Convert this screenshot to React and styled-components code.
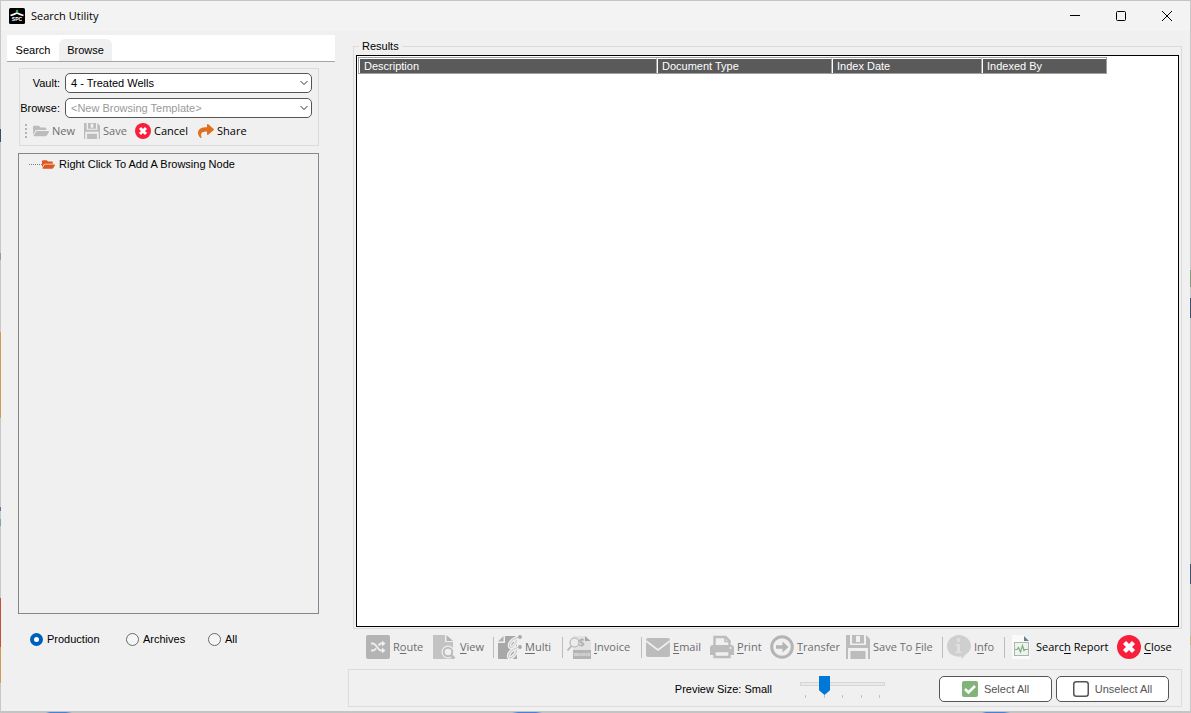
import React, { useState } from "react";
import styled, { createGlobalStyle } from "styled-components";
import { FaFolderOpen, FaShare } from "react-icons/fa";

const GlobalStyle = createGlobalStyle`
  * {
    box-sizing: border-box;
  }
  body {
    margin: 0;
    font-family: "Liberation Sans", Arial, sans-serif;
    font-size: 11px;
    line-height: 16px;
    color: #000000;
  }
  button, select, input {
    font: inherit;
    color: inherit;
    margin: 0;
  }
`;

// the desktop shows through as a one pixel edge around the window
const Desktop = styled.div`
  display: flex;
  min-height: 100vh;
  padding: 1px 1px 2px;
  background:
    linear-gradient(to right, transparent 46px, #4a80d4 50px 66px, transparent 72px 512px, #4a80d4 518px 536px, transparent 542px 982px, #4a80d4 986px 1004px, transparent 1010px) bottom / 100% 1px no-repeat,
    linear-gradient(#c8c8c8 129px, #39506b 129px 142px, #c8c8c8 142px 253px, #7fa3b5 253px 260px, #c8c8c8 260px 332px, #cf9b4f 332px 418px, #c8c8c8 418px 507px, #5f6fa0 507px 511px, #c8c8c8 511px 519px, #7fa3b5 519px 526px, #c8c8c8 526px 598px, #c3523a 598px 647px, #cf9b4f 647px 683px, #c8c8c8 683px) left / 1px 100% no-repeat,
    linear-gradient(#c8c8c8 270px, #849a7c 270px 287px, #c8c8c8 287px 298px, #405368 298px 318px, #c8c8c8 318px 564px, #405368 564px 584px, #c8c8c8 584px 636px, #c0b795 636px 645px, #c8c8c8 645px) right / 1px 100% no-repeat,
    #c4c4c4;
`;

const Window = styled.div`
  flex: 1;
  display: flex;
  flex-direction: column;
  background: #f0f0f0;
`;

const TitleBar = styled.header`
  display: flex;
  align-items: center;
  height: 30px;
  padding-left: 8px;
  background: #f3f3f3;
`;

const Title = styled.h1`
  flex: 1;
  margin: 0;
  padding-left: 6px;
  font: 400 11px/16px "Open Sans", sans-serif;
`;

const CaptionButton = styled.button`
  display: grid;
  place-items: center;
  width: 46px;
  height: 30px;
  padding: 0;
  border: 0;
  background: none;
`;

const Body = styled.div`
  flex: 1;
  display: flex;
  gap: 13px;
  padding: 4px 8px 4px 6px;
`;

const Sidebar = styled.aside`
  flex: 0 0 328px;
  display: flex;
  flex-direction: column;
`;

const TabStrip = styled.div`
  display: flex;
  align-items: flex-end;
  height: 27px;
  border-bottom: 1px solid #a5a5a5;
  background: #ffffff;
`;

const Tab = styled.button`
  width: ${(p) => (p.$active ? 53 : 52)}px;
  height: 22px;
  padding: 0;
  border: 0;
  border-radius: 6px 6px 0 0;
  background: ${(p) => (p.$active ? "#f0f0f0" : "#ffffff")};
`;

const Template = styled.div`
  display: flex;
  flex-direction: column;
  gap: 5px;
  height: 78px;
  margin: 6px 16px 0 12px;
  padding: 4px 6px 0 0;
  border: 1px solid #dcdcdc;
`;

const Field = styled.div`
  display: grid;
  grid-template-columns: 40px 1fr;
  align-items: center;
  column-gap: 5px;
  height: 20px;
`;

const FieldLabel = styled.label`
  justify-self: end;
  background: #f0f0f0;
  white-space: nowrap;
`;

const SelectBox = styled.div`
  position: relative;
  height: 20px;

  svg {
    position: absolute;
    right: 4px;
    top: 7px;
    pointer-events: none;
  }
`;

const Select = styled.select`
  display: block;
  width: 100%;
  height: 20px;
  padding: 0 20px 0 5px;
  appearance: none;
  border: 1px solid #555555;
  border-radius: 5px;
  background: #ffffff;
  color: ${(p) => (p.$hint ? "#9a9a9a" : "#000000")};
`;

const Actions = styled.div`
  display: flex;
  align-items: center;
  height: 16px;
  padding-left: 5px;
`;

const Grip = styled.span`
  width: 2px;
  height: 14px;
  margin-right: 6px;
  background: repeating-linear-gradient(#b4b4b4 0 2px, transparent 2px 4px);
`;

const Action = styled.button`
  display: flex;
  align-items: center;
  gap: 3px;
  flex: 0 0 ${(p) => p.$width}px;
  height: 24px;
  padding: 0;
  border: 0;
  background: none;
  font-family: "Open Sans", sans-serif;
  color: #000000;
  white-space: nowrap;

  &:disabled {
    color: #6d6d6d;
  }
  svg {
    flex: none;
  }
  u {
    text-underline-offset: 2px;
  }
`;

const Tree = styled.ul`
  flex: 1;
  margin: 7px 16px 0 11px;
  padding: 2px 10px;
  border: 1px solid #828790;
  list-style: none;
`;

const TreeNode = styled.li`
  display: flex;
  align-items: center;
  height: 16px;

  &::before {
    content: "";
    width: 13px;
    border-top: 1px dotted #808080;
  }
  span {
    padding-left: 4px;
  }
`;

const Scope = styled.div`
  display: flex;
  height: 93px;
  padding: 17px 0 0 23px;
`;

const RadioLabel = styled.label`
  display: flex;
  align-items: center;
  gap: 4px;
  flex: 0 0 ${(p) => p.$width}px;
  height: 16px;
`;

const Radio = styled.input`
  width: 13px;
  height: 13px;
  appearance: none;
  border: 1px solid #6a6a6a;
  border-radius: 50%;
  background: #f5f5f5;

  &:checked {
    border: 4px solid #005fb8;
    background: #ffffff;
  }
`;

const Main = styled.main`
  flex: 1;
  min-width: 0;
  display: flex;
  flex-direction: column;
`;

const Results = styled.fieldset`
  flex: 1;
  display: flex;
  flex-direction: column;
  min-width: 0;
  margin: 3px 0 0 5px;
  padding: 0 2px 1px;
  border: 1px solid #dcdcdc;
`;

const Legend = styled.legend`
  height: 17px;
  margin-left: 3px;
  padding: 0 3px;
`;

const List = styled.div`
  flex: 1;
  padding: 1px;
  border: 1px solid #000000;
  background: #ffffff;
`;

const Table = styled.table`
  width: 749px;
  table-layout: fixed;
  border-collapse: separate;
  border-spacing: 0;
  border: 1px solid #a0a0a0;
`;

const Column = styled.th`
  width: ${(p) => p.$width}px;
  height: 15px;
  padding: 0 4px;
  border-left: 1px solid #ffffff;
  border-top: 1px solid #ffffff;
  border-right: 1px solid #a0a0a0;
  background: #5a5a5a;
  color: #ffffff;
  font-weight: 400;
  line-height: 14px;
  text-align: left;

  &:last-child {
    border-right: 0;
  }
`;

const Toolbar = styled.div`
  display: flex;
  align-items: center;
  height: 40px;
  padding: 0 8px 4px 18px;
`;

const Divider = styled.span`
  width: 1px;
  height: 21px;
  margin-right: 4px;
  background: #bdbdbd;
`;

const Footer = styled.footer`
  display: flex;
  align-items: center;
  justify-content: flex-end;
  height: 38px;
  padding: 2px 12px 0 0;
  border: 1px solid #dcdcdc;
`;

const SizeSlider = styled.div`
  width: 85px;
  margin: 0 50px 0 28px;
  padding-bottom: 6px;
`;

const Range = styled.input`
  display: block;
  width: 100%;
  height: 20px;
  appearance: none;
  background: none;

  &::-webkit-slider-runnable-track {
    height: 4px;
    border: 1px solid #d6d6d6;
    background: #e7eaea;
  }
  &::-webkit-slider-thumb {
    appearance: none;
    width: 11px;
    height: 19px;
    margin-top: -7px;
    background: #0078d7;
    clip-path: polygon(0 0, 100% 0, 100% 75%, 50% 100%, 0 75%);
  }
`;

const Ticks = styled.div`
  display: flex;
  justify-content: space-between;
  margin-top: 1px;
  padding: 0 5px;

  i {
    width: 1px;
    height: 3px;
    background: #c0c0c0;
  }
`;

const PanelButton = styled.button`
  display: flex;
  align-items: center;
  justify-content: center;
  gap: 6px;
  width: 113px;
  height: 26px;
  margin-left: 4px;
  padding: 0;
  border: 1px solid #555555;
  border-radius: 5px;
  background: #ffffff;
  color: #555555;
`;

function Icon({ size = 24, children }) {
  return (
    <svg width={size} height={size} viewBox="0 0 24 24" fill="none" aria-hidden="true">
      {children}
    </svg>
  );
}

function Chevron() {
  return (
    <svg width="8" height="6" viewBox="0 0 8 6" fill="none" stroke="#333333" aria-hidden="true">
      <path d="M.5 1 4 4.5 7.5 1" />
    </svg>
  );
}

function Logo() {
  return (
    <svg width="16" height="16" viewBox="0 0 16 16" fill="none" aria-hidden="true">
      <rect width="16" height="16" rx="1.5" fill="#000000" />
      <path d="M1.500 7.500Q5 6.500 8 5q3 1.500 6.500 2.500" stroke="#ffffff" strokeWidth="1.400" />
      <circle cx="8" cy="3" r="1.300" fill="#20b24b" />
      <text x="8" y="13" textAnchor="middle" fontSize="5" fontWeight="700" fill="#ffffff">SPC</text>
    </svg>
  );
}

function CloseIcon({ size }) {
  return (
    <Icon size={size}>
      <circle cx="12" cy="12" r="12" fill="#fa1e3c" />
      <path d="m7.500 7.500 9 9M16.500 7.500l-9 9" stroke="#ffffff" strokeWidth="4.400" />
    </Icon>
  );
}

function SaveIcon({ size }) {
  return (
    <Icon size={size}>
      <path
        fill="#bcbcbc"
        fillRule="evenodd"
        d="M0 0h4v10h16V0l4 4v20h-2V13H2v11H0ZM6 0h12v8.500H6ZM10 1v6h4V1ZM4.500 16h15v8h-15Z"
      />
    </Icon>
  );
}

function RouteIcon() {
  return (
    <Icon>
      <rect width="24" height="24" rx="2" fill="#b4b4b4" />
      <path d="M5 8.500h2c3 0 5 7 8 7h2M5 15.500h2c1.300 0 2.200-1 3-2.300M12.500 10.500c.8-1.200 1.500-2 2.500-2h2" stroke="#efefef" strokeWidth="1.800" />
      <path d="m16 5.500 3.500 3-3.500 3ZM16 12.500l3.500 3-3.500 3Z" fill="#efefef" />
    </Icon>
  );
}

function ViewIcon() {
  return (
    <Icon>
      <path d="M0 0h12v7h8v17H0Z" fill="#c3c3c3" />
      <path d="M13.500 0 20 6h-6.500Z" fill="#b4b4b4" />
      <circle cx="15" cy="17" r="6.500" fill="#f0f0f0" />
      <circle cx="15" cy="17" r="4.300" fill="#f0f0f0" stroke="#bcbcbc" strokeWidth="2" />
      <path d="m18 20 3.500 3.500" stroke="#bcbcbc" strokeWidth="2.500" />
    </Icon>
  );
}

function MultiIcon() {
  return (
    <Icon>
      <path d="M0 8h7V1h12v23H0Z" fill="#a8a8a8" />
      <path d="M0 6.500 5.500 1v5.500Z" fill="#b0b0b0" />
      <path d="M22 2C16 3 11 7 11.500 11s6 0 7-6M22 12c-6 1-11.500 5-11.500 9s7 1 8-6" stroke="#f0f0f0" strokeWidth="3.500" />
      <path d="M22 2C16 3 11 7 11.500 11s6 0 7-6M22 12c-6 1-11.500 5-11.500 9s7 1 8-6" stroke="#c4c4c4" strokeWidth="1" />
      <circle cx="22" cy="2" r="1.900" fill="#a8a8a8" />
      <circle cx="22" cy="12" r="1.900" fill="#a8a8a8" />
    </Icon>
  );
}

function InvoiceIcon() {
  return (
    <Icon>
      <path d="M6 1h12l6 5v18H6Z" fill="#e2e2e2" />
      <path d="m18 1 5.500 5H18Z" fill="#a8a8a8" />
      <path d="M6 15h18v9H6Z" fill="#b4b4b4" />
      <circle cx="7.500" cy="7.500" r="4.500" fill="#ececec" stroke="#b4b4b4" strokeWidth="1.200" />
      <path d="m4.500 11-4 4.500" stroke="#b4b4b4" strokeWidth="1.800" />
      <text x="14.500" y="10.500" textAnchor="middle" fontSize="10" fontWeight="700" fill="#b0b0b0">$</text>
      <text x="15" y="21" textAnchor="middle" fontSize="4" fontWeight="700" fill="#e4e4e4">INVOICE</text>
    </Icon>
  );
}

function EmailIcon() {
  return (
    <Icon>
      <rect y="3" width="24" height="19" rx="2" fill="#bcbcbc" />
      <path d="m0 6 12 9 12-9" stroke="#f0f0f0" strokeWidth="1.600" />
    </Icon>
  );
}

function PrintIcon() {
  return (
    <Icon>
      <path d="M4.500 11V2h11l4 4v5" stroke="#bcbcbc" strokeWidth="2.400" />
      <path d="M15 2v4.500h4" stroke="#bcbcbc" strokeWidth="1.600" />
      <path d="M0 20v-7q0-3 3-3h18q3 0 3 3v7Z" fill="#bcbcbc" />
      <path d="M4.500 16h15v6h-15Z" fill="#f0f0f0" stroke="#bcbcbc" strokeWidth="2.400" />
      <circle cx="20.500" cy="13" r="1" fill="#f0f0f0" />
    </Icon>
  );
}

function TransferIcon() {
  return (
    <Icon>
      <circle cx="12" cy="12" r="10.300" stroke="#b4b4b4" strokeWidth="3" />
      <path d="M6 10.300h6.500V6.500l6 5.500-6 5.500v-3.800H6Z" fill="#b4b4b4" />
    </Icon>
  );
}

function InfoIcon() {
  return (
    <Icon>
      <path d="M12 0c6.600 0 12 5 12 11 0 4-2.500 7-6 9l-3 4-1-2.500C6 22.500 0 18 0 11 0 5 5.400 0 12 0Z" fill="#cfcfcf" />
      <circle cx="11.500" cy="5" r="1.900" fill="#e0e0e0" />
      <path d="M8.500 9H13v7.500h2V18H8.500v-1.500h1.700v-6H8.500Z" fill="#e0e0e0" />
    </Icon>
  );
}

function ReportIcon() {
  return (
    <Icon>
      <path d="M3 0h12l6 6v18H3Z" fill="#fafafa" />
      <path d="m15 1 5 5h-5Z" fill="#67808f" />
      <rect x="5.500" y="7.500" width="14" height="13" fill="#eef3ee" stroke="#a9b7b3" />
      <path d="M6 14.500h2l1.500-2 2 4.500 2-6.500 1.500 5 1-1h3" stroke="#7fb07f" strokeWidth="1.200" />
    </Icon>
  );
}

const columns = [
  { label: "Description", width: 298 },
  { label: "Document Type", width: 175 },
  { label: "Index Date", width: 150 },
  { label: "Indexed By", width: 124 },
];

// hot is the letter of the label that is its access key
const tools = [
  { label: "Route", hot: 1, icon: <RouteIcon />, width: 67 },
  { label: "View", hot: 0, icon: <ViewIcon />, width: 60 },
  { divider: true },
  { label: "Multi", hot: 0, icon: <MultiIcon />, width: 64 },
  { divider: true },
  { label: "Invoice", hot: 0, icon: <InvoiceIcon />, width: 74 },
  { divider: true },
  { label: "Email", hot: 0, icon: <EmailIcon />, width: 64 },
  { label: "Print", hot: 0, icon: <PrintIcon />, width: 60 },
  { label: "Transfer", hot: 0, icon: <TransferIcon />, width: 76 },
  { label: "Save To File", hot: 8, icon: <SaveIcon />, width: 96 },
  { divider: true },
  { label: "Info", hot: 1, icon: <InfoIcon />, width: 57 },
  { divider: true },
  { label: "Search Report", hot: 5, icon: <ReportIcon />, width: 108, enabled: true },
  { label: "Close", hot: 0, icon: <CloseIcon />, width: 57, enabled: true },
];

const scopes = [
  { label: "Production", width: 96 },
  { label: "Archives", width: 82 },
  { label: "All", width: 60 },
];

export default function App() {
  const [tab, setTab] = useState("Browse");
  const [scope, setScope] = useState("Production");
  const [size, setSize] = useState(1);

  return (
    <>
      <GlobalStyle />
      <Desktop>
        <Window>
          <TitleBar>
            <Logo />
            <Title>Search Utility</Title>
            <CaptionButton aria-label="Minimize">
              <svg width="10" height="10" viewBox="0 0 10 10" stroke="#000000">
                <path d="M0 4.500h10" />
              </svg>
            </CaptionButton>
            <CaptionButton aria-label="Maximize">
              <svg width="10" height="10" viewBox="0 0 10 10" fill="none" stroke="#000000">
                <rect x=".5" y=".5" width="9" height="9" rx="1" />
              </svg>
            </CaptionButton>
            <CaptionButton aria-label="Close window">
              <svg width="10" height="10" viewBox="0 0 10 10" stroke="#000000">
                <path d="m0 0 10 10M10 0 0 10" />
              </svg>
            </CaptionButton>
          </TitleBar>
          <Body>
            <Sidebar>
              <TabStrip role="tablist">
                {["Search", "Browse"].map((name) => (
                  <Tab
                    key={name}
                    role="tab"
                    aria-selected={tab === name}
                    $active={tab === name}
                    onClick={() => setTab(name)}
                  >
                    {name}
                  </Tab>
                ))}
              </TabStrip>
              <Template>
                <Field>
                  <FieldLabel htmlFor="vault">Vault:</FieldLabel>
                  <SelectBox>
                    <Select id="vault">
                      <option>4 - Treated Wells</option>
                    </Select>
                    <Chevron />
                  </SelectBox>
                </Field>
                <Field>
                  <FieldLabel htmlFor="browse">Browse:</FieldLabel>
                  <SelectBox>
                    <Select id="browse" $hint>
                      <option>&lt;New Browsing Template&gt;</option>
                    </Select>
                    <Chevron />
                  </SelectBox>
                </Field>
                <Actions>
                  <Grip />
                  <Action $width={51} disabled>
                    <FaFolderOpen size={16} color="#bcbcbc" />
                    New
                  </Action>
                  <Action $width={51} disabled>
                    <SaveIcon size={16} />
                    Save
                  </Action>
                  <Action $width={63}>
                    <CloseIcon size={16} />
                    Cancel
                  </Action>
                  <Action $width={50}>
                    <FaShare size={16} color="#e0701f" />
                    Share
                  </Action>
                </Actions>
              </Template>
              <Tree>
                <TreeNode>
                  <FaFolderOpen size={13} color="#dd5a1c" />
                  <span>Right Click To Add A Browsing Node</span>
                </TreeNode>
              </Tree>
              <Scope>
                {scopes.map(({ label, width }) => (
                  <RadioLabel key={label} $width={width}>
                    <Radio
                      type="radio"
                      name="scope"
                      checked={scope === label}
                      onChange={() => setScope(label)}
                    />
                    {label}
                  </RadioLabel>
                ))}
              </Scope>
            </Sidebar>
            <Main>
              <Results>
                <Legend>Results</Legend>
                <List>
                  <Table>
                    <thead>
                      <tr>
                        {columns.map(({ label, width }) => (
                          <Column key={label} $width={width}>
                            {label}
                          </Column>
                        ))}
                      </tr>
                    </thead>
                  </Table>
                </List>
              </Results>
              <Toolbar>
                {tools.map((tool, i) =>
                  tool.divider ? (
                    <Divider key={i} />
                  ) : (
                    <Action key={i} $width={tool.width} disabled={!tool.enabled}>
                      {tool.icon}
                      <span>
                        {tool.label.slice(0, tool.hot)}
                        <u>{tool.label[tool.hot]}</u>
                        {tool.label.slice(tool.hot + 1)}
                      </span>
                    </Action>
                  )
                )}
              </Toolbar>
              <Footer>
                <label htmlFor="size">Preview Size: Small</label>
                <SizeSlider>
                  <Range
                    id="size"
                    type="range"
                    min="0"
                    max="4"
                    value={size}
                    onChange={(e) => setSize(Number(e.target.value))}
                  />
                  <Ticks>
                    <i />
                    <i />
                    <i />
                    <i />
                    <i />
                  </Ticks>
                </SizeSlider>
                <PanelButton>
                  <svg width="16" height="16" viewBox="0 0 16 16" fill="none" aria-hidden="true">
                    <rect width="16" height="16" rx="2" fill="#82b47a" />
                    <path d="m3 8 3.500 3.500L13 5" stroke="#ffffff" strokeWidth="2.600" />
                  </svg>
                  Select All
                </PanelButton>
                <PanelButton>
                  <svg width="16" height="16" viewBox="0 0 16 16" fill="none" aria-hidden="true">
                    <rect x=".75" y=".75" width="14.500" height="14.500" rx="2.500" stroke="#555555" strokeWidth="1.500" />
                  </svg>
                  Unselect All
                </PanelButton>
              </Footer>
            </Main>
          </Body>
        </Window>
      </Desktop>
    </>
  );
}
